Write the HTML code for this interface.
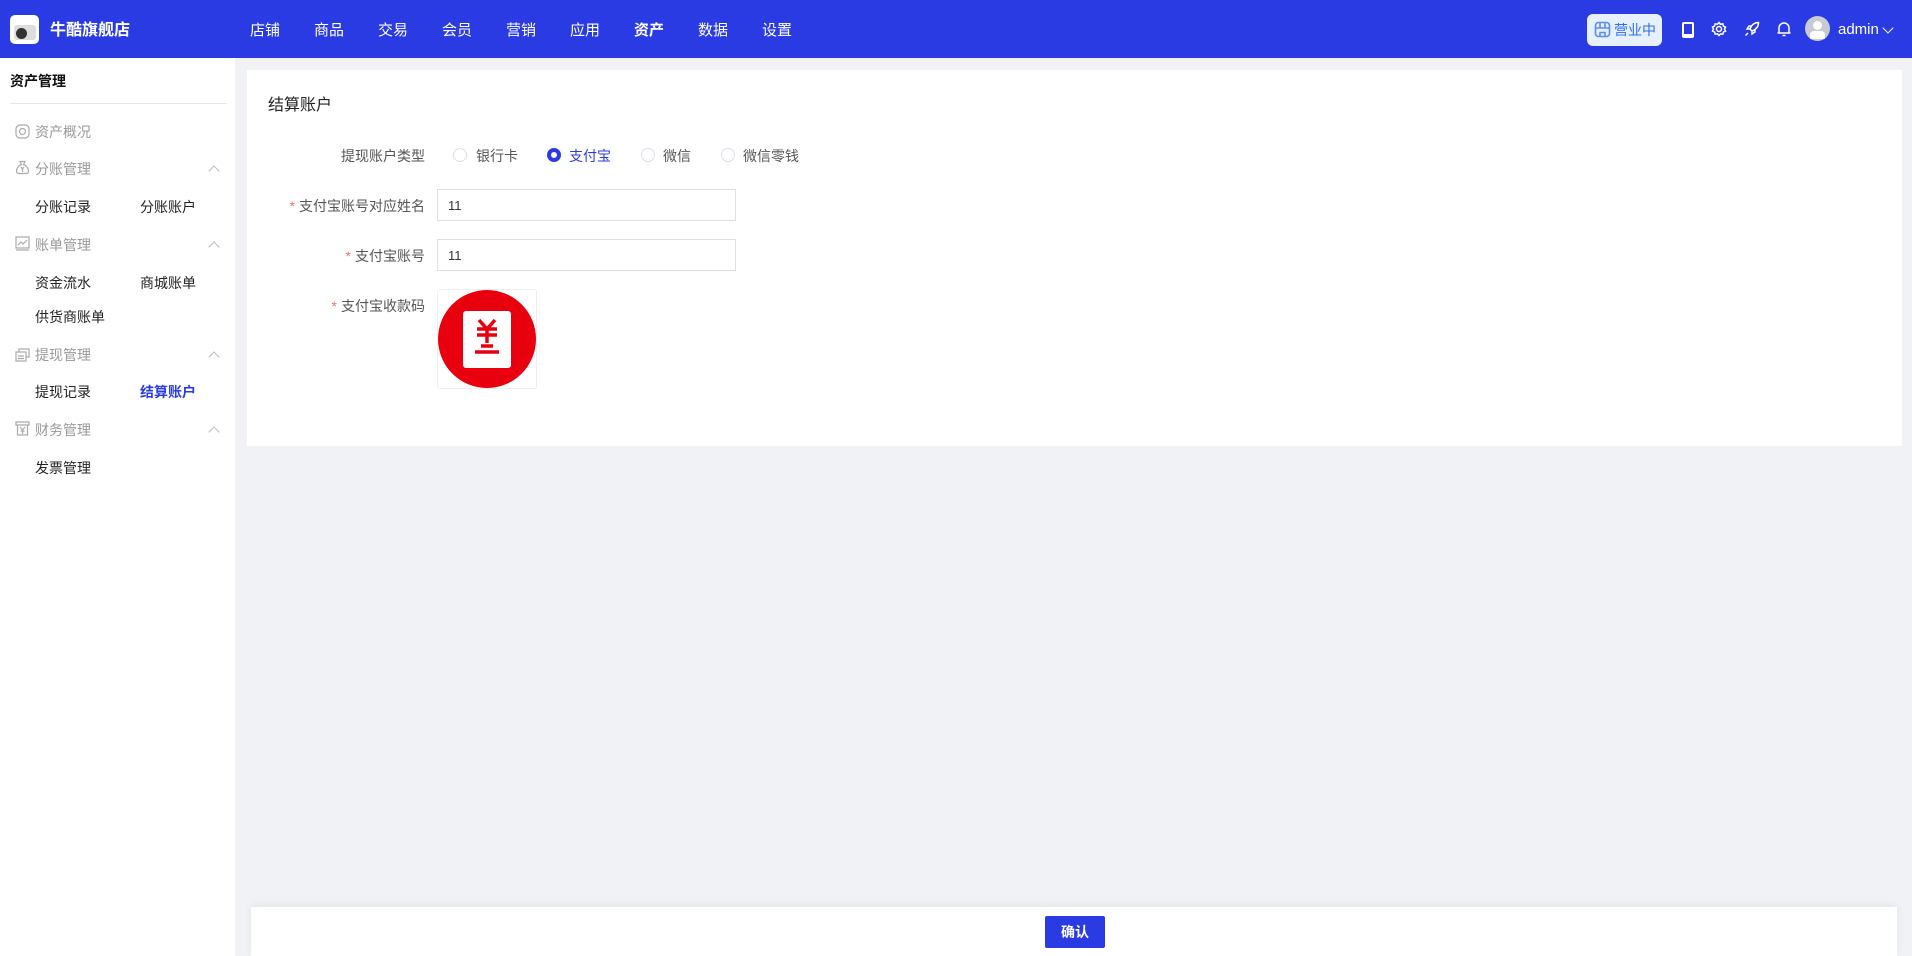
<!DOCTYPE html>
<html><head><meta charset="utf-8"><style>
*{margin:0;padding:0;box-sizing:border-box}
body{width:1912px;height:956px;overflow:hidden;background:#f0f2f5;font-family:"Liberation Sans","Noto Sans CJK SC",sans-serif;position:relative;color:#333}
.hdr{position:absolute;left:0;top:0;width:1912px;height:58px;background:#2a3be3}
.abs{position:absolute;white-space:nowrap}
.nav{color:#fff;font-size:15px;top:19px}
.side{position:absolute;left:0;top:58px;width:235px;height:898px;background:#fff}
.g{color:#999;font-size:14px}
.s{color:#222;font-size:14px}
.chev{position:absolute;width:8px;height:8px;border-left:1px solid #bbb;border-top:1px solid #bbb;transform:rotate(45deg)}
.card{position:absolute;left:247px;top:70px;width:1655px;height:376px;background:#fff}
.lbl{font-size:14px;color:#555;text-align:right;width:300px}
.star{color:#f56c6c;margin-right:4px}
.inp{position:absolute;left:437px;width:299px;height:32px;border:1px solid #dcdfe6;font-size:13px;padding:8px 10px;color:#333;background:#fff}
.rd{position:absolute;width:14px;height:14px;border:1px solid #dcdfe6;border-radius:50%;top:148px}
</style></head><body>
<div class="hdr"></div>
<div class="abs" style="left:10px;top:15px;width:29px;height:29px;background:#fff;border-radius:5px;overflow:hidden"><div style="position:absolute;left:4px;top:10px;width:22px;height:15px;background:#ddd;border-radius:3px"></div><div style="position:absolute;left:6px;top:13px;width:11px;height:11px;background:#333;border-radius:50%"></div></div>
<div class="abs" style="left:50px;top:18px;color:#fff;font-size:16px;font-weight:bold;top:16px">牛酷旗舰店</div>
<div class="abs nav" style="left:250px">店铺</div>
<div class="abs nav" style="left:314px">商品</div>
<div class="abs nav" style="left:378px">交易</div>
<div class="abs nav" style="left:442px">会员</div>
<div class="abs nav" style="left:506px">营销</div>
<div class="abs nav" style="left:570px">应用</div>
<div class="abs nav" style="left:634px;font-weight:bold">资产</div>
<div class="abs nav" style="left:698px">数据</div>
<div class="abs nav" style="left:762px">设置</div>
<div class="abs" style="left:1587px;top:14px;width:75px;height:32px;background:#e6f0ff;border-radius:6px;color:#2a6ef0;font-size:14px;padding:6px 0 0 27px">营业中</div>
<svg class="abs" style="left:1594px;top:21px" width="17" height="17" viewBox="0 0 17 17" fill="none" stroke="#5b8ef0" stroke-width="1.6"><rect x="1.5" y="1.5" width="14" height="14" rx="3"/><path d="M1.5 7h14M6 1.5v5.5M11 1.5v5.5M6 15.5v-4h5v4"/></svg>
<svg class="abs" style="left:1681px;top:21px" width="14" height="18" viewBox="0 0 14 18"><rect x="1" y="1" width="12" height="16" rx="2" fill="#fff"/><rect x="3" y="3" width="8" height="10" fill="#2a3be3"/></svg>
<svg class="abs" style="left:1711px;top:21px" width="16" height="16" viewBox="0 0 16 16" fill="none" stroke="#fff" stroke-width="1.5"><circle cx="8" cy="8" r="2.5"/><path d="M8 1.5l1.5 1.8 2.3-.4.6 2.2 2.1 1-1 2 1 2-2.1 1-.6 2.2-2.3-.4L8 14.5l-1.5-1.7-2.3.4-.6-2.2-2.1-1 1-2-1-2 2.1-1 .6-2.2 2.3.4z"/></svg>
<svg class="abs" style="left:1744px;top:21px" width="16" height="16" viewBox="0 0 16 16" fill="none" stroke="#fff" stroke-width="1.5"><path d="M14.5 1.5c-4 0-7 2.5-8.5 6.5l2 2c4-1.5 6.5-4.5 6.5-8.5zM6 8H3l2-3h3M8 10v3l3-2V8M4 12l-2.5 2.5"/></svg>
<svg class="abs" style="left:1776px;top:21px" width="16" height="16" viewBox="0 0 16 16" fill="none" stroke="#fff" stroke-width="1.5"><path d="M3 12V7a5 5 0 0110 0v5zM1.5 12h13M6.5 14.5h3"/></svg>
<div class="abs" style="left:1805px;top:16px;width:25px;height:25px;border-radius:50%;background:#c8cbd2;overflow:hidden"><div style="position:absolute;left:8px;top:5px;width:9px;height:9px;border-radius:50%;background:#fff"></div><div style="position:absolute;left:5px;top:15px;width:15px;height:8px;border-radius:4px 4px 0 0;background:#fff"></div></div>
<div class="abs" style="left:1838px;top:21px;color:#fff;font-size:15px">admin</div>
<div class="abs" style="left:1884px;top:24px;width:8px;height:8px;border-right:1.3px solid #fff;border-bottom:1.3px solid #fff;transform:rotate(45deg)"></div>

<div class="side"></div>
<div class="abs" style="left:10px;top:71px;font-size:14px;font-weight:bold;color:#111">资产管理</div>
<div class="abs" style="left:10px;top:103px;width:217px;height:1px;background:#e6e6e6"></div>
<svg class="abs" style="left:15px;top:124px" width="15" height="15" viewBox="0 0 15 15" fill="none" stroke="#aaa" stroke-width="1.2"><rect x="1" y="1" width="13" height="13" rx="4"/><circle cx="7.5" cy="7.5" r="3"/></svg>
<div class="abs g" style="left:35px;top:122px">资产概况</div>
<svg class="abs" style="left:15px;top:160px" width="15" height="15" viewBox="0 0 15 15" fill="none" stroke="#aaa" stroke-width="1.2"><path d="M5 1.5h5l-1.5 3c3 1 5 4 5 6.5 0 2-1 2.5-3 2.5h-6c-2 0-3-.5-3-2.5 0-2.5 2-5.5 5-6.5z"/><path d="M6 7l1.5 2 1.5-2M7.5 9v3"/></svg>
<div class="abs g" style="left:35px;top:159px">分账管理</div><div class="chev" style="left:210px;top:167px"></div>
<div class="abs s" style="left:35px;top:197px">分账记录</div><div class="abs s" style="left:140px;top:197px">分账账户</div>
<svg class="abs" style="left:15px;top:236px" width="15" height="15" viewBox="0 0 15 15" fill="none" stroke="#aaa" stroke-width="1.2"><rect x="1" y="1" width="13" height="11"/><path d="M1 14h13M3 9l3-3 2 2 4-4"/></svg>
<div class="abs g" style="left:35px;top:235px">账单管理</div><div class="chev" style="left:210px;top:243px"></div>
<div class="abs s" style="left:35px;top:273px">资金流水</div><div class="abs s" style="left:140px;top:273px">商城账单</div>
<div class="abs s" style="left:35px;top:307px">供货商账单</div>
<svg class="abs" style="left:15px;top:347px" width="15" height="15" viewBox="0 0 15 15" fill="none" stroke="#aaa" stroke-width="1.2"><rect x="1" y="5" width="10" height="9"/><path d="M4 5V2h10v8h-3M3 9h6M3 11.5h6"/></svg>
<div class="abs g" style="left:35px;top:345px">提现管理</div><div class="chev" style="left:210px;top:353px"></div>
<div class="abs s" style="left:35px;top:382px">提现记录</div><div class="abs s" style="left:140px;top:382px;color:#2a3be3;font-weight:bold">结算账户</div>
<svg class="abs" style="left:15px;top:421px" width="15" height="15" viewBox="0 0 15 15" fill="none" stroke="#aaa" stroke-width="1.2"><path d="M1 1h13v3H1zM2.5 4v10h10V4M5 6l2.5 3 2.5-3M7.5 9v4M5.5 10h4"/></svg>
<div class="abs g" style="left:35px;top:420px">财务管理</div><div class="chev" style="left:210px;top:428px"></div>
<div class="abs s" style="left:35px;top:458px">发票管理</div>

<div class="card"></div>
<div class="abs" style="left:268px;top:91px;font-size:16px;color:#222">结算账户</div>
<div class="abs lbl" style="left:125px;top:146px">提现账户类型</div>
<div class="rd" style="left:453px"></div><div class="abs" style="left:476px;top:146px;font-size:14px;color:#555">银行卡</div>
<div class="rd" style="left:547px;border:4px solid #2a3be3"></div><div class="abs" style="left:569px;top:146px;font-size:14px;color:#2a3be3">支付宝</div>
<div class="rd" style="left:641px"></div><div class="abs" style="left:663px;top:146px;font-size:14px;color:#555">微信</div>
<div class="rd" style="left:721px"></div><div class="abs" style="left:743px;top:146px;font-size:14px;color:#555">微信零钱</div>
<div class="abs lbl" style="left:125px;top:196px"><span class="star">*</span>支付宝账号对应姓名</div>
<div class="inp" style="top:189px">11</div>
<div class="abs lbl" style="left:125px;top:246px"><span class="star">*</span>支付宝账号</div>
<div class="inp" style="top:239px">11</div>
<div class="abs lbl" style="left:125px;top:296px"><span class="star">*</span>支付宝收款码</div>
<div class="abs" style="left:437px;top:289px;width:100px;height:100px;border:1px solid #eee;border-radius:3px;background:#fff"></div>
<svg class="abs" style="left:437px;top:289px" width="100" height="100" viewBox="0 0 100 100"><ellipse cx="50" cy="50" rx="49" ry="49" fill="#e8000f"/><rect x="26" y="22" width="48" height="57" rx="3" fill="#fff"/><path d="M42 31l8 9 8-9M40 40h20M40 46h20M50 40v14M44 57h12M38 63h24" stroke="#e8000f" stroke-width="3.5" fill="none"/></svg>

<div class="abs" style="left:251px;top:907px;width:1646px;height:49px;background:#fff;box-shadow:0 -2px 8px rgba(0,0,0,0.06)"></div>
<div class="abs" style="left:1045px;top:916px;width:60px;height:32px;background:#2a3be3;border-radius:2px;color:#fff;font-size:14px;font-weight:bold;text-align:center;line-height:32px">确认</div>
</body></html>
